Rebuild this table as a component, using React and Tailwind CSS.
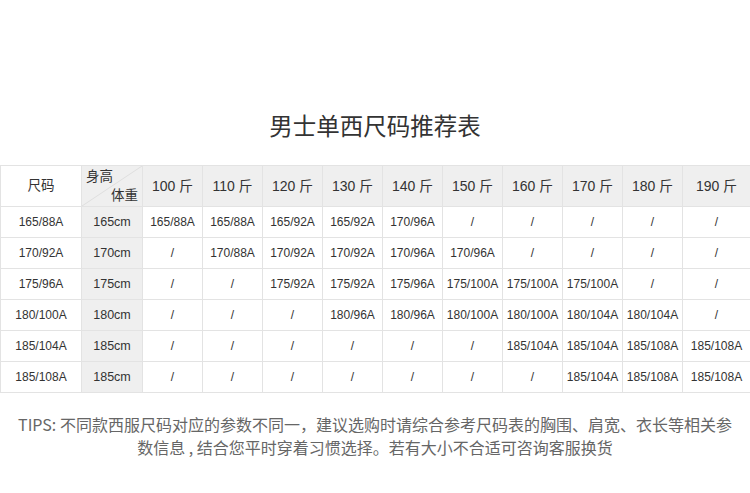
const weights = ['100', '110', '120', '130', '140', '150', '160', '170', '180', '190'];

const rows = [
  { size: '165/88A', height: '165cm', cells: ['165/88A', '165/88A', '165/92A', '165/92A', '170/96A', '/', '/', '/', '/', '/'] },
  { size: '170/92A', height: '170cm', cells: ['/', '170/88A', '170/92A', '170/92A', '170/96A', '170/96A', '/', '/', '/', '/'] },
  { size: '175/96A', height: '175cm', cells: ['/', '/', '175/92A', '175/92A', '175/96A', '175/100A', '175/100A', '175/100A', '/', '/'] },
  { size: '180/100A', height: '180cm', cells: ['/', '/', '/', '180/96A', '180/96A', '180/100A', '180/100A', '180/104A', '180/104A', '/'] },
  { size: '185/104A', height: '185cm', cells: ['/', '/', '/', '/', '/', '/', '185/104A', '185/104A', '185/108A', '185/108A'] },
  { size: '185/108A', height: '185cm', cells: ['/', '/', '/', '/', '/', '/', '/', '185/104A', '185/108A', '185/108A'] },
];

const font = { fontFamily: '"Liberation Sans", "Noto Sans CJK SC", sans-serif' };
const cjk = { fontFamily: '"Noto Sans CJK SC", sans-serif' };

export default function App() {
  return (
    <div className="w-[750px] h-[493px] bg-white text-[#333]" style={font}>
      <div className="pt-[107px] text-center text-[23.5px] leading-[36px] text-[#333]" style={cjk}>男士单西尺码推荐表</div>

      <table className="mt-[22px] w-[750px] table-fixed border-collapse">
        <colgroup>
          <col className="w-[81px]" />
          <col className="w-[61px]" />
          {weights.map((w, i) => (
            <col key={w} className={i === 9 ? 'w-[68px]' : 'w-[60px]'} />
          ))}
        </colgroup>
        <thead>
          <tr className="h-[41px]">
            <th className="border border-[#e3e3e3] bg-white text-[13.5px] font-normal">尺码</th>
            <th className="relative border border-[#e3e3e3] bg-[#efefef] p-0 text-[13.5px] font-normal">
              <svg className="absolute inset-0 h-full w-full" preserveAspectRatio="none" viewBox="0 0 60 41">
                <line x1="0" y1="41" x2="60" y2="0" stroke="#dadada" strokeWidth="0.8" />
              </svg>
              <span className="absolute left-[4px] top-[3px] leading-[16px]">身高</span>
              <span className="absolute right-[4px] bottom-[2px] leading-[16px]">体重</span>
            </th>
            {weights.map((w) => (
              <th key={w} className="border border-[#e3e3e3] bg-[#efefef] text-[14px] font-normal whitespace-nowrap">
                {w} 斤
              </th>
            ))}
          </tr>
        </thead>
        <tbody>
          {rows.map((r, ri) => (
            <tr key={ri} className="h-[31px]">
              <td className="border border-[#e3e3e3] text-center text-[12px]">{r.size}</td>
              <td className="border border-[#e3e3e3] bg-[#efefef] text-center text-[12.5px]">{r.height}</td>
              {r.cells.map((c, ci) => (
                <td key={ci} className="border border-[#e3e3e3] px-0 text-center text-[12px] whitespace-nowrap">
                  {c}
                </td>
              ))}
            </tr>
          ))}
        </tbody>
      </table>

      <div className="mt-[20px] text-center text-[16px] leading-[23px] text-[#666] whitespace-nowrap" style={cjk}>
        <div>TIPS: 不同款西服尺码对应的参数不同一，建议选购时请综合参考尺码表的胸围、肩宽、衣长等相关参</div>
        <div>数信息 , 结合您平时穿着习惯选择。若有大小不合适可咨询客服换货</div>
      </div>
    </div>
  );
}
